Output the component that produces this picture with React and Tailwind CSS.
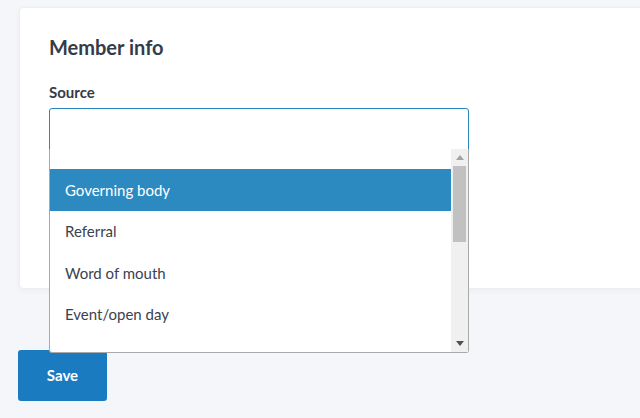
import React from "react";

const options = ["Governing body", "Referral", "Word of mouth", "Event/open day"];

function Scrollbar() {
  return (
    <div className="flex w-[17px] flex-col items-center bg-[#f0f0f0]">
      <div className="flex h-[17px] w-full items-center justify-center">
        <svg width="8" height="5" viewBox="0 0 8 5">
          <path d="M0 5 L4 0 L8 5 Z" fill="#a3a3a3" />
        </svg>
      </div>
      <div className="h-[76px] w-[13px] bg-[#c1c1c1]" />
      <div className="flex-1" />
      <div className="flex h-[17px] w-full items-center justify-center">
        <svg width="8" height="5" viewBox="0 0 8 5">
          <path d="M0 0 L8 0 L4 5 Z" fill="#505050" />
        </svg>
      </div>
    </div>
  );
}

export default function App() {
  return (
    <div
      className="relative h-[418px] w-[640px] overflow-hidden bg-[#f5f6fa] pl-[19px] pt-[7px]"
      style={{ fontFamily: "Lato, 'Open Sans', sans-serif" }}
    >
      <div className="h-[282px] w-[700px] rounded-[4px] border border-[#eceef2] bg-white pl-[29px] pt-[27px] shadow-[0_2px_6px_rgba(0,0,0,0.04)]">
        <h2 className="text-[20px] font-bold leading-[24px] text-[#353b48]">Member info</h2>
        <div className="mt-[24px] text-[15px] font-bold leading-[18px] text-[#353b48]">Source</div>
        <div className="relative mt-[7px] w-[420px]">
          <div className="h-[42px] rounded-t-[3px] border border-[#2a86c0] bg-white" />
          <div className="absolute left-0 top-[41px] z-10 flex h-[204px] w-[420px] rounded-b-[3px] border border-t-0 border-[#a9a9a9] bg-white">
            <div className="flex-1 pt-[20px]">
              {options.map((o, i) => (
                <div
                  key={o}
                  className={`flex h-[41.5px] items-center pl-[15px] text-[15px] ${
                    i === 0 ? "bg-[#2d8ac0] text-white" : "text-[#3b4150]"
                  }`}
                >
                  {o}
                </div>
              ))}
            </div>
            <Scrollbar />
          </div>
        </div>
      </div>
      <button className="mt-[61px] -ml-[1px] flex h-[51px] w-[89px] items-center justify-center rounded-[3px] bg-[#1b7bc0] text-[15px] font-bold text-white">
        Save
      </button>
    </div>
  );
}
